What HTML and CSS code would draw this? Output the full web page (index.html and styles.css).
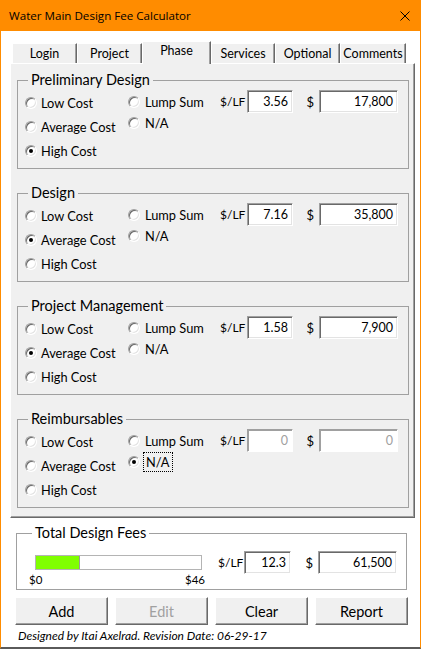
FILE: index.html
```html
<!DOCTYPE html>
<html>
<head>
<meta charset="utf-8">
<link rel="stylesheet" href="styles.css">
</head>
<body>
<div class="window">
  <div class="titlebar">
    <span class="title">Water Main Design Fee Calculator</span>
    <svg class="close" viewBox="0 0 10 10" width="10" height="10"><path d="M0.5 0.5 L9.5 9.5 M9.5 0.5 L0.5 9.5" stroke="#000" stroke-width="1" fill="none"/></svg>
  </div>
  <div class="client">
    <div class="tabs">
      <div class="tab w65">Login</div>
      <div class="tab w64">Project</div>
      <div class="tab active">Phase</div>
      <div class="tab w63">Services</div>
      <div class="tab w65">Optional</div>
      <div class="tab w66">Comments</div>
    </div>
    <div class="page">
      <fieldset class="frame">
        <legend>Preliminary Design</legend>
        <div class="row">
          <div class="col1">
            <label class="opt"><span class="radio"></span>Low Cost</label>
            <label class="opt"><span class="radio"></span>Average Cost</label>
            <label class="opt"><span class="radio on"></span>High Cost</label>
          </div>
          <div class="col2">
            <label class="opt"><span class="radio"></span>Lump Sum</label>
            <label class="opt"><span class="radio"></span>N/A</label>
          </div>
          <div class="vals">
            <span class="lbl-lf">$/LF</span><span class="box lf">3.56</span>
            <span class="lbl-d">$</span><span class="box amt">17,800</span>
          </div>
        </div>
      </fieldset>
      <fieldset class="frame">
        <legend>Design</legend>
        <div class="row">
          <div class="col1">
            <label class="opt"><span class="radio"></span>Low Cost</label>
            <label class="opt"><span class="radio on"></span>Average Cost</label>
            <label class="opt"><span class="radio"></span>High Cost</label>
          </div>
          <div class="col2">
            <label class="opt"><span class="radio"></span>Lump Sum</label>
            <label class="opt"><span class="radio"></span>N/A</label>
          </div>
          <div class="vals">
            <span class="lbl-lf">$/LF</span><span class="box lf">7.16</span>
            <span class="lbl-d">$</span><span class="box amt">35,800</span>
          </div>
        </div>
      </fieldset>
      <fieldset class="frame">
        <legend>Project Management</legend>
        <div class="row">
          <div class="col1">
            <label class="opt"><span class="radio"></span>Low Cost</label>
            <label class="opt"><span class="radio on"></span>Average Cost</label>
            <label class="opt"><span class="radio"></span>High Cost</label>
          </div>
          <div class="col2">
            <label class="opt"><span class="radio"></span>Lump Sum</label>
            <label class="opt"><span class="radio"></span>N/A</label>
          </div>
          <div class="vals">
            <span class="lbl-lf">$/LF</span><span class="box lf">1.58</span>
            <span class="lbl-d">$</span><span class="box amt">7,900</span>
          </div>
        </div>
      </fieldset>
      <fieldset class="frame">
        <legend>Reimbursables</legend>
        <div class="row">
          <div class="col1">
            <label class="opt"><span class="radio"></span>Low Cost</label>
            <label class="opt"><span class="radio"></span>Average Cost</label>
            <label class="opt"><span class="radio"></span>High Cost</label>
          </div>
          <div class="col2">
            <label class="opt"><span class="radio"></span>Lump Sum</label>
            <label class="opt"><span class="radio on"></span><span class="focus">N/A</span></label>
          </div>
          <div class="vals">
            <span class="lbl-lf">$/LF</span><span class="box lf disabled">0</span>
            <span class="lbl-d">$</span><span class="box amt disabled">0</span>
          </div>
        </div>
      </fieldset>
    </div>
    <fieldset class="frame total">
      <legend>Total Design Fees</legend>
      <div class="totrow">
        <div class="meter">
          <div class="bar"><div class="fill" style="width:44px"></div></div>
          <div class="scale"><span>$0</span><span>$46</span></div>
        </div>
        <div class="vals tvals">
          <span class="lbl-lf">$/LF</span><span class="box lf">12.3</span>
          <span class="lbl-d">$</span><span class="box amt">61,500</span>
        </div>
      </div>
    </fieldset>
    <div class="buttons">
      <div class="btn">Add</div>
      <div class="btn dis">Edit</div>
      <div class="btn">Clear</div>
      <div class="btn">Report</div>
    </div>
    <div class="footer">Designed by Itai Axelrad. Revision Date: 06-29-17</div>
  </div>
</div>
</body>
</html>
```
FILE: styles.css
```css
* { box-sizing: border-box; }
html, body { margin: 0; padding: 0; }
body {
  width: 421px;
  height: 649px;
  overflow: hidden;
  background: #fff;
  font-family: Lato, "Open Sans", sans-serif;
  color: #000;
}
.window {
  width: 421px;
  height: 649px;
  display: flex;
  flex-direction: column;
  border-left: 1px solid #ff8c00;
  border-right: 1px solid #ff8c00;
  border-bottom: 2px solid #5a5a5a;
}
.titlebar {
  height: 31px;
  flex: none;
  background: #ff8c00;
  display: flex;
  align-items: center;
  padding-left: 8px;
}
.title {
  font-family: "Open Sans", sans-serif;
  font-size: 11.6px;
}
.close { margin-left: auto; margin-right: 10px; }
.client {
  flex: 1;
  background: #fff;
  display: flex;
  flex-direction: column;
}
.tabs {
  display: flex;
  align-items: flex-end;
  height: 22px;
  margin: 10px 0 0 11px;
  position: relative;
  z-index: 2;
}
.tab {
  height: 20px;
  background: #f0f0f0;
  border-left: 1px solid #fff;
  border-top: 1px solid #fff;
  border-right: 1px solid #696969;
  box-shadow: inset -1px 0 0 #a0a0a0;
  font-size: 12.5px;
  display: flex;
  align-items: center;
  justify-content: center;
  flex: none;
}
.w63 { width: 64px; }
.w64 { width: 65px; }
.w65 { width: 65px; }
.w66 { width: 66px; }
.tab.active {
  width: 69px;
  height: 23px;
  margin-bottom: -1px;
  padding-bottom: 5px;
}
.page {
  margin-left: 9px;
  width: 405px;
  height: 455px;
  background: #f0f0f0;
  border-top: 1px solid #fff;
  border-left: 1px solid #fff;
  border-right: 1px solid #696969;
  border-bottom: 1px solid #696969;
  box-shadow: inset -1px -1px 0 #a0a0a0;
  padding: 6px 0 0 6px;
  display: flex;
  flex-direction: column;
  gap: 14px;
}
.frame {
  margin: 0;
  width: 392px;
  height: 99px;
  padding: 0 9px 0 7px;
  border: 1px solid #a0a0a0;
  min-inline-size: 0;
}
legend {
  font-size: 14.5px;
  line-height: 20px;
  height: 20px;
  padding: 0 3px;
  margin-left: 3px;
}
.row { display: flex; }
.col1, .col2 { display: flex; flex-direction: column; }
.col1 { width: 103px; gap: 7px; padding-top: 4px; }
.col2 { width: 92px; gap: 4px; padding-top: 3px; }
.opt {
  display: flex;
  align-items: center;
  height: 17px;
  font-size: 12.8px;
  gap: 4px;
  white-space: nowrap;
}
.col2 .opt { gap: 5px; }
.radio {
  width: 12px;
  height: 12px;
  flex: none;
  border-radius: 50%;
  background: #fff;
  border: 1px solid;
  border-color: #a0a0a0 #fff #fff #a0a0a0;
  box-shadow: inset 1px 1px 0 #696969, inset -1px -1px 0 #e3e3e3;
  display: flex;
  align-items: center;
  justify-content: center;
}
.radio.on::after {
  content: "";
  width: 4px;
  height: 4px;
  border-radius: 50%;
  background: #000;
}
.focus { outline: 1px dotted #000; outline-offset: 1px; padding: 0 1px; }
.vals { display: flex; align-items: center; height: 23px; font-size: 12px; }
.lbl-lf { width: 27px; }
.lbl-d { width: 26px; text-align: right; padding-right: 5px; font-size: 13px; }
.box {
  height: 23px;
  background: #fff;
  border: 1px solid;
  border-color: #a0a0a0 #fff #fff #a0a0a0;
  box-shadow: inset 1px 1px 0 #696969, inset -1px -1px 0 #e3e3e3;
  text-align: right;
  padding-right: 4px;
  line-height: 21px;
  font-size: 12.5px;
}
.box.lf { width: 46px; }
.box.amt { width: 79px; }
.box.disabled { color: #a0a0a0; box-shadow: inset 1px 1px 0 #a0a0a0; }
.total {
  margin: 5px 0 0 15px;
  width: 391px;
  height: 67px;
  padding: 0 9px 0 12px;
}
.totrow { display: flex; }
.meter { width: 176px; padding-top: 12px; }
.bar {
  margin-left: 6px;
  width: 167px;
  height: 15px;
  border: 1px solid #b4b4b4;
  background: #fff;
}
.fill { height: 13px; background: #80ff00; border-right: 1px solid #9a9a9a; }
.scale {
  display: flex;
  justify-content: space-between;
  font-size: 11.5px;
  margin-top: 3px;
  line-height: 14px;
}
.tvals { margin-left: auto; margin-top: 8px; }
.tvals .lbl-lf { width: 26px; }
.tvals .box.lf { width: 47px; }
.tvals .lbl-d { width: 27px; }
.buttons {
  display: flex;
  gap: 7px;
  margin: 7px 0 0 14px;
}
.btn {
  width: 93px;
  height: 28px;
  background: #f0f0f0;
  border-top: 1px solid #fff;
  border-left: 1px solid #fff;
  border-right: 1px solid #696969;
  border-bottom: 1px solid #696969;
  box-shadow: inset -1px -1px 0 #a0a0a0;
  display: flex;
  align-items: center;
  justify-content: center;
  font-size: 14.5px;
}
.btn.dis { color: #a0a0a0; }
.footer {
  margin: 4px 0 0 17px;
  font-size: 12px;
  line-height: 14px;
  font-style: italic;
}
```
